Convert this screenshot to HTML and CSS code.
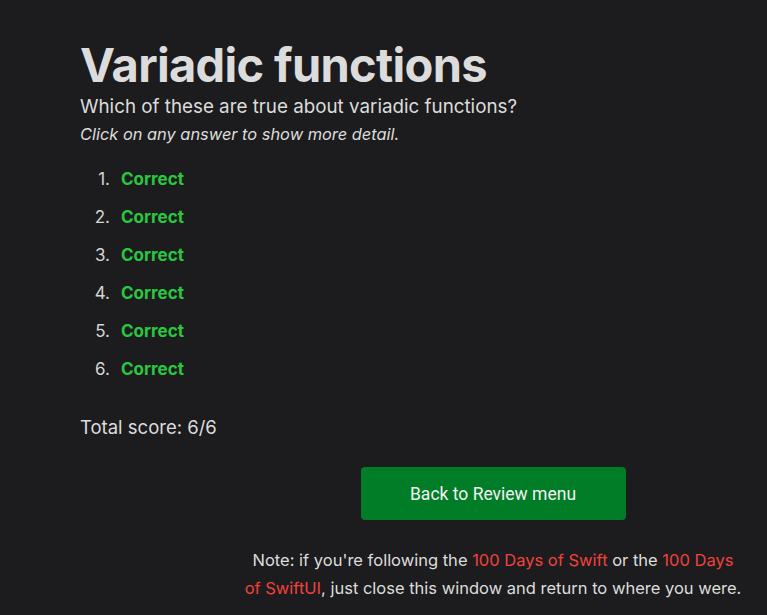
FILE: index.html
```html
<!DOCTYPE html>
<html>
<head>
<meta charset="utf-8">
<link rel="stylesheet" href="styles.css">
</head>
<body>
<main class="page">
  <h1 class="title">Variadic functions</h1>
  <p class="question">Which of these are true about variadic functions?</p>
  <p class="hint">Click on any answer to show more detail.</p>
  <ol class="answers">
    <li><span class="correct">Correct</span></li>
    <li><span class="correct">Correct</span></li>
    <li><span class="correct">Correct</span></li>
    <li><span class="correct">Correct</span></li>
    <li><span class="correct">Correct</span></li>
    <li><span class="correct">Correct</span></li>
  </ol>
  <p class="score">Total score: 6/6</p>
  <div class="footer">
    <div class="footer-col">
      <a class="btn" href="#">Back to Review menu</a>
      <p class="note">Note: if you're following the <a href="#">100 Days of Swift</a> or the <a href="#">100 Days of SwiftUI</a>, just close this window and return to where you were.</p>
    </div>
  </div>
</main>
</body>
</html>
```
FILE: styles.css
```css
html, body {
  margin: 0;
  background: #1c1c1e;
}
body {
  font-family: Inter, "Noto Sans", sans-serif;
  color: #dcdcdc;
}
.page {
  padding: 37px 24px 0 80px;
}
.title {
  font-size: 47px;
  font-weight: 700;
  letter-spacing: -0.7px;
  line-height: 56px;
  margin: 0;
}
.question {
  font-size: 18.8px;
  line-height: 28px;
  margin: 0;
}
.hint {
  font-size: 16.4px;
  font-style: italic;
  line-height: 26px;
  margin: 0;
}
.answers {
  margin: 20px 0 0 0;
  padding: 0;
  list-style: none;
  counter-reset: item;
  font-size: 17px;
}
.answers li {
  counter-increment: item;
  height: 38px;
  line-height: 24px;
  display: flex;
}
.answers li::before {
  content: counter(item) ".";
  width: 30px;
  text-align: right;
  margin-right: 11px;
  color: #d6d6d6;
}
.correct {
  color: #28c840;
  font-weight: 700;
}
.score {
  font-size: 18.5px;
  line-height: 26px;
  margin: 19px 0 0 0;
}
.footer {
  display: flex;
  justify-content: flex-end;
}
.footer-col {
  width: 500px;
  display: flex;
  flex-direction: column;
  align-items: center;
}
.btn {
  margin-top: 27px;
  width: 265px;
  height: 53px;
  background: #007d26;
  border-radius: 4px;
  color: #f2f2f2;
  font-family: Roboto, sans-serif;
  font-size: 17.5px;
  text-decoration: none;
  display: flex;
  align-items: center;
  justify-content: center;
}
.note {
  margin: 26px 0 0 0;
  text-align: center;
  font-size: 16.5px;
  line-height: 28px;
}
.note a {
  color: #f2413d;
  text-decoration: none;
}
```
